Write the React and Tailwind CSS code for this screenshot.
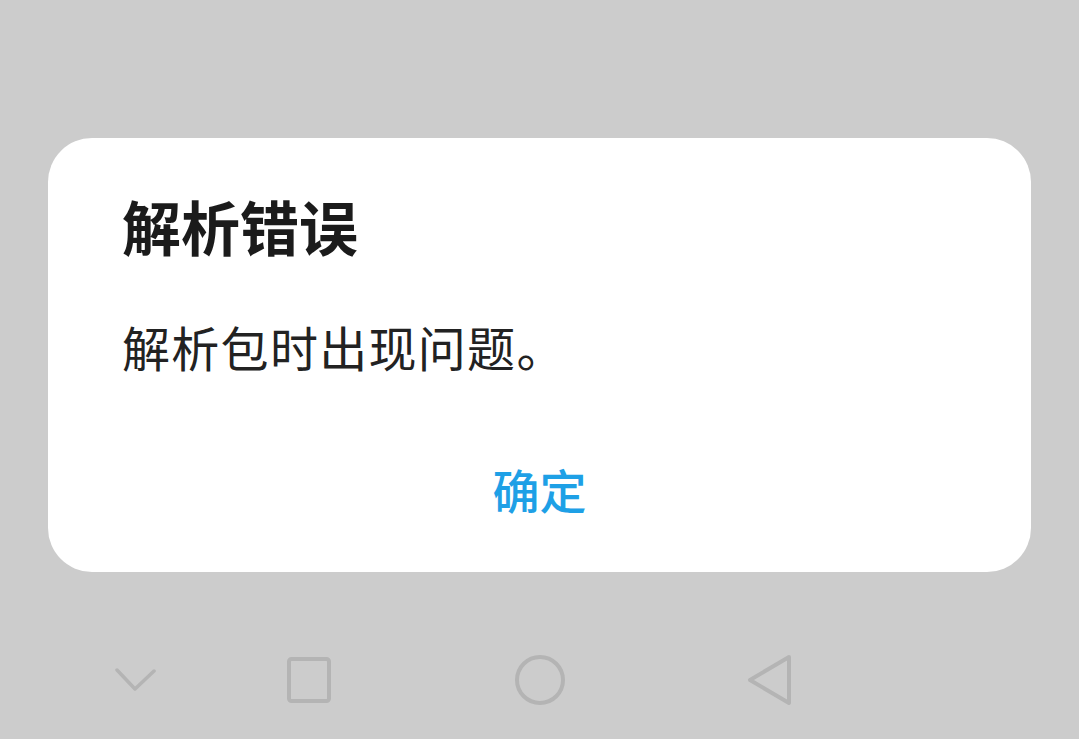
import React from 'react';

const font = { fontFamily: '"Noto Sans CJK SC", "Noto Sans", sans-serif' };

const NavBar = () => (
  <div className="flex items-center h-[100px] mt-[58px] pl-[114px]">
    {/* 收起键盘 */}
    <svg width="42" height="26" viewBox="0 0 42 26" className="shrink-0">
      <polyline points="3,3 21,22 40,4" fill="none" stroke="#b4b4b4" strokeWidth="3.5" strokeLinecap="round" strokeLinejoin="round" />
    </svg>
    {/* 最近任务 */}
    <svg width="48" height="50" viewBox="0 0 48 50" className="shrink-0 ml-[129px]">
      <rect x="4" y="4" width="40" height="42" rx="2.5" fill="none" stroke="#b4b4b4" strokeWidth="4" />
    </svg>
    {/* 主页 */}
    <svg width="54" height="54" viewBox="0 0 54 54" className="shrink-0 ml-[180px]">
      <circle cx="27" cy="27" r="23" fill="none" stroke="#b4b4b4" strokeWidth="4" />
    </svg>
    {/* 返回 */}
    <svg width="48" height="54" viewBox="0 0 48 54" className="shrink-0 ml-[179px]">
      <polygon points="43,4 4,27 43,50" fill="none" stroke="#b4b4b4" strokeWidth="4" strokeLinejoin="round" />
    </svg>
  </div>
);

export default function App() {
  return (
    <div className="w-[1079px] h-[739px] bg-[#cccccc] overflow-hidden flex flex-col pt-[138px]" style={font}>
      {/* 对话框 */}
      <div className="mx-[48px] h-[434px] bg-white rounded-[44px] flex flex-col pt-[58px] pl-[74px] pr-[74px]">
        <div className="text-[59px] leading-none font-bold text-[#1b1b1b]">解析错误</div>
        <div className="mt-[67px] text-[48px] leading-none tracking-[1.3px] text-[#222222]">解析包时出现问题。</div>
        <div className="mt-auto mb-[60px] flex justify-center -ml-[74px] -mr-[74px]">
          <span className="text-[47px] leading-none font-medium text-[#1ea0e6]">确定</span>
        </div>
      </div>
      <NavBar />
    </div>
  );
}
